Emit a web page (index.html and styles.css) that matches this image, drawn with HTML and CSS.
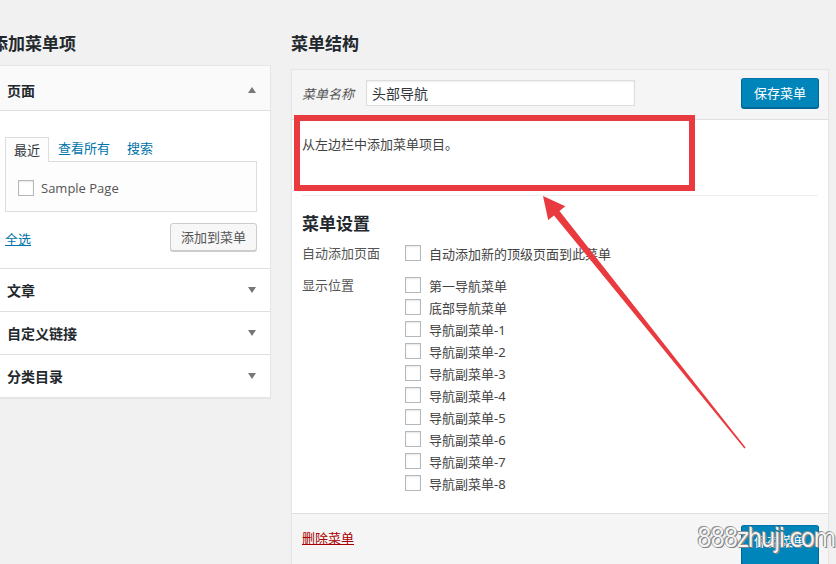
FILE: index.html
```html
<!DOCTYPE html>
<html lang="zh-CN">
<head>
<meta charset="utf-8">
<title>菜单</title>
<link rel="stylesheet" href="styles.css">
</head>
<body>
<div class="wrap">
  <div class="col-left">
    <h2 class="title">添加菜单项</h2>
    <div class="panel">
      <div class="acc-head open"><span>页面</span><i class="tri up"></i></div>
      <div class="acc-body">
        <div class="tabs">
          <span class="tab active">最近</span>
          <a class="tab">查看所有</a>
          <a class="tab">搜索</a>
        </div>
        <div class="tab-panel">
          <label class="item"><span class="cb"></span><span class="latin">Sample Page</span></label>
        </div>
        <div class="acc-actions">
          <a class="select-all">全选</a>
          <span class="btn-secondary">添加到菜单</span>
        </div>
      </div>
      <div class="acc-head"><span>文章</span><i class="tri down"></i></div>
      <div class="acc-head"><span>自定义链接</span><i class="tri down"></i></div>
      <div class="acc-head"><span>分类目录</span><i class="tri down"></i></div>
    </div>
  </div>
  <div class="col-right">
    <h2 class="title">菜单结构</h2>
    <div class="menu-box">
      <div class="menu-head">
        <div class="name-group">
          <span class="name-label">菜单名称</span>
          <span class="name-input">头部导航</span>
        </div>
        <span class="btn-primary">保存菜单</span>
      </div>
      <div class="menu-body">
        <p class="drop-hint">从左边栏中添加菜单项目。</p>
        <div class="settings">
          <h3 class="settings-title">菜单设置</h3>
          <div class="set-row first">
            <span class="set-label">自动添加页面</span>
            <div class="set-opts">
              <label class="opt"><span class="cb"></span>自动添加新的顶级页面到此菜单</label>
            </div>
          </div>
          <div class="set-row">
            <span class="set-label">显示位置</span>
            <div class="set-opts">
              <label class="opt"><span class="cb"></span>第一导航菜单</label>
              <label class="opt"><span class="cb"></span>底部导航菜单</label>
              <label class="opt"><span class="cb"></span>导航副菜单-1</label>
              <label class="opt"><span class="cb"></span>导航副菜单-2</label>
              <label class="opt"><span class="cb"></span>导航副菜单-3</label>
              <label class="opt"><span class="cb"></span>导航副菜单-4</label>
              <label class="opt"><span class="cb"></span>导航副菜单-5</label>
              <label class="opt"><span class="cb"></span>导航副菜单-6</label>
              <label class="opt"><span class="cb"></span>导航副菜单-7</label>
              <label class="opt"><span class="cb"></span>导航副菜单-8</label>
            </div>
          </div>
        </div>
      </div>
      <div class="menu-foot">
        <a class="delete-link">删除菜单</a>
        <span class="btn-primary tall">保存菜单</span>
      </div>
    </div>
  </div>
</div>

<div class="annot-box"></div>
<svg class="annot-arrow" width="836" height="564" viewBox="0 0 836 564">
  <polygon points="543,196 565.3,206.3 559.5,211 745.6,447.5 744.4,448.5 554,215.4 548.2,220.1" fill="#e93b3f"/>
</svg>
<div class="watermark">888zhuji.com</div>
</body>
</html>
```

FILE: styles.css
```css
* { box-sizing: border-box; }
html, body { margin: 0; padding: 0; }
body {
  background: #f1f1f1;
  font-family: "Noto Sans", "Noto Sans CJK SC", sans-serif;
  font-size: 13px;
  color: #444;
  position: relative;
  width: 836px;
  height: 564px;
  overflow: hidden;
}
.wrap {
  display: flex;
  gap: 20px;
  margin-left: -9px;
  padding-top: 31px;
}
.col-left { width: 280px; flex: none; }
.col-right { width: 538px; flex: none; }
.title {
  margin: 0;
  font-size: 17px;
  line-height: 24px;
  font-weight: 700;
  color: #23282d;
  font-family: "Noto Sans CJK SC", sans-serif;
}

/* left panel */
.panel {
  margin-top: 10px;
  background: #fff;
  border: 1px solid #e5e5e5;
  box-shadow: 0 1px 1px rgba(0,0,0,.04);
}
.acc-head {
  display: flex;
  align-items: center;
  justify-content: space-between;
  height: 43px;
  padding: 0 14px 1px 15px;
  border-top: 1px solid #dfdfdf;
  font-family: "Noto Sans CJK SC", sans-serif;
  font-weight: 700;
  font-size: 14px;
  color: #23282d;
  background: #fff;
}
.acc-head.open {
  height: 45px;
  border-top: none;
  padding-top: 3px;
  padding-bottom: 0;
  background: #fafafa;
  border-bottom: 1px solid #dfdfdf;
}
.tri { display: block; width: 0; height: 0; border-left: 4.5px solid transparent; border-right: 4.5px solid transparent; }
.tri.up { border-bottom: 6px solid #777; }
.tri.down { border-top: 6px solid #777; }
.acc-body {
  padding: 25px 13px 17px 13px;
}
.tabs { display: flex; align-items: flex-end; height: 25px; }
.tab {
  height: 25px;
  line-height: 24px;
  padding: 0 8px;
  color: #0073aa;
  font-family: "Noto Sans CJK SC", sans-serif;
  margin-right: 1px;
}
.tab.active {
  color: #32373c;
  border: 1px solid #ddd;
  border-bottom: none;
  background: #fdfdfd;
  margin-bottom: -1px;
  position: relative;
  z-index: 1;
}
.tab-panel {
  height: 51px;
  border: 1px solid #ddd;
  background: #fdfdfd;
  padding: 17px 12px 0 12px;
}
.item { display: flex; align-items: center; height: 17px; }
.latin { font-family: "Open Sans", "Noto Sans", sans-serif; font-size: 13px; color: #555; }
.cb {
  display: inline-block;
  width: 16px;
  height: 16px;
  border: 1px solid #b4b9be;
  background: #fff;
  box-shadow: inset 0 1px 2px rgba(0,0,0,.1);
  margin-right: 8px;
  flex: none;
}
.item .cb { margin-right: 7px; }
.acc-actions {
  display: flex;
  justify-content: space-between;
  align-items: center;
  margin-top: 11px;
}
.select-all {
  color: #0073aa;
  text-decoration: underline;
  font-family: "Noto Sans CJK SC", sans-serif;
  padding-top: 2px;
}
.btn-secondary {
  display: inline-block;
  height: 28px;
  line-height: 26px;
  padding: 0 10px;
  border: 1px solid #ccc;
  border-radius: 3px;
  background: #f7f7f7;
  box-shadow: 0 1px 0 #ccc;
  color: #555;
  font-family: "Noto Sans CJK SC", sans-serif;
}

/* right box */
.menu-box {
  margin-top: 14px;
  border: 1px solid #e5e5e5;
  background: #fff;
  box-shadow: 0 1px 1px rgba(0,0,0,.04);
}
.menu-head {
  display: flex;
  justify-content: space-between;
  align-items: center;
  padding: 8px 9px 11px 10px;
  background: #f5f5f5;
  border-bottom: 1px solid #dfdfdf;
}
.name-group { display: flex; align-items: center; }
.name-label {
  font-style: italic;
  color: #555;
  font-family: "Noto Sans CJK SC", sans-serif;
  width: 64px;
}
.name-input {
  display: block;
  width: 269px;
  height: 26px;
  line-height: 24px;
  padding: 0 5px;
  border: 1px solid #ddd;
  background: #fff;
  box-shadow: inset 0 1px 2px rgba(0,0,0,.07);
  font-size: 14px;
  color: #32373c;
  font-family: "Noto Sans CJK SC", sans-serif;
}
.btn-primary {
  display: inline-block;
  width: 78px;
  height: 30px;
  line-height: 28px;
  text-align: center;
  background: #0085ba;
  border: 1px solid #0073aa;
  border-color: #0073aa #006799 #006799;
  border-radius: 3px;
  box-shadow: 0 1px 0 #006799;
  color: #fff;
  font-family: "Noto Sans CJK SC", sans-serif;
}
.btn-primary.tall { height: 40px; line-height: 30px; }
.menu-body { padding: 0 10px 19px 10px; }
.drop-hint {
  margin: 0;
  padding-top: 15px;
  line-height: 18px;
  height: 75px;
  color: #444;
  font-family: "Noto Sans CJK SC", sans-serif;
}
.settings { border-top: 1px solid #eee; padding-top: 15px; }
.settings-title {
  margin: 0;
  font-size: 17px;
  line-height: 24px;
  font-weight: 700;
  color: #23282d;
  font-family: "Noto Sans CJK SC", sans-serif;
}
.set-row { display: flex; margin-top: 10px; }
.set-row.first { margin-top: 7px; }
.set-label {
  width: 103px;
  flex: none;
  line-height: 22px;
  color: #555;
  font-family: "Noto Sans CJK SC", sans-serif;
}
.set-opts { display: flex; flex-direction: column; }
.opt {
  display: flex;
  align-items: center;
  height: 22px;
  color: #444;
  font-family: "Noto Sans", "Noto Sans CJK SC", sans-serif;
}
.menu-foot {
  display: flex;
  justify-content: space-between;
  align-items: flex-start;
  padding: 11px 9px 0 10px;
  height: 60px;
  background: #f5f5f5;
  border-top: 1px solid #dfdfdf;
}
.delete-link {
  color: #a00;
  text-decoration: underline;
  line-height: 26px;
  font-family: "Noto Sans CJK SC", sans-serif;
}

/* annotations */
.annot-box {
  position: absolute;
  left: 294px;
  top: 115px;
  width: 401px;
  height: 76px;
  border: 6px solid #e93b3f;
}
.annot-arrow {
  position: absolute;
  left: 0;
  top: 0;
  pointer-events: none;
}
.watermark {
  position: absolute;
  left: 697px;
  top: 523px;
  font-family: "DejaVu Sans Condensed", "Liberation Sans Narrow", sans-serif;
  font-size: 26px;
  line-height: 30px;
  color: #f4f4f4;
  letter-spacing: -1.6px;
  text-shadow: 0 0 1px #555, 1px 1px 0 #888, -1px -1px 0 #999;
}
```
